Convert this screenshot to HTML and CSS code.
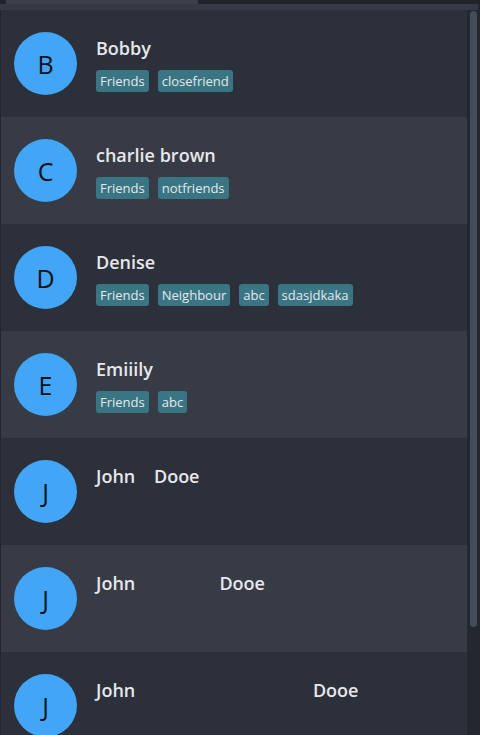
FILE: index.html
```html
<!DOCTYPE html>
<html>
<head>
<meta charset="utf-8">
<link rel="stylesheet" href="styles.css">
</head>
<body>
<div class="tabbar"><div class="tab"></div></div>
<div class="band"></div>
<div class="pane">
<div class="list">
  <div class="row">
    <div class="avatar">B</div>
    <div class="info"><div class="name">Bobby</div><div class="tags"><span class="tag">Friends</span><span class="tag">closefriend</span></div></div>
  </div>
  <div class="row alt">
    <div class="avatar">C</div>
    <div class="info"><div class="name">charlie brown</div><div class="tags"><span class="tag">Friends</span><span class="tag">notfriends</span></div></div>
  </div>
  <div class="row">
    <div class="avatar">D</div>
    <div class="info"><div class="name">Denise</div><div class="tags"><span class="tag">Friends</span><span class="tag">Neighbour</span><span class="tag">abc</span><span class="tag">sdasjdkaka</span></div></div>
  </div>
  <div class="row alt">
    <div class="avatar">E</div>
    <div class="info"><div class="name">Emiiily</div><div class="tags"><span class="tag">Friends</span><span class="tag">abc</span></div></div>
  </div>
  <div class="row">
    <div class="avatar">J</div>
    <div class="info"><div class="name">John    Dooe</div></div>
  </div>
  <div class="row alt">
    <div class="avatar">J</div>
    <div class="info"><div class="name">John                  Dooe</div></div>
  </div>
  <div class="row">
    <div class="avatar">J</div>
    <div class="info"><div class="name">John                                      Dooe</div></div>
  </div>
</div>
<div class="scrollbar"><div class="thumb"></div></div>
</div>
</body>
</html>
```
FILE: styles.css
```css
html, body {
  margin: 0;
  padding: 0;
  background: #22262e;
  overflow: hidden;
}
body {
  font-family: "Open Sans", "Noto Sans", sans-serif;
  width: 480px;
  height: 735px;
}
.tabbar {
  height: 4px;
  background: #1f232a;
  padding-left: 6px;
}
.tab {
  width: 192px;
  height: 4px;
  background: #3b3f49;
}
.band {
  height: 6px;
  width: 478px;
  background: #353a44;
}
.pane {
  height: 725px;
  display: flex;
  overflow: hidden;
}
.list {
  flex: 1;
  overflow: hidden;
  border-left: 1px solid #22262e;
}
.scrollbar {
  width: 13px;
  flex-shrink: 0;
  background: #232830;
  padding: 1px 3px;
  box-sizing: border-box;
}
.thumb {
  height: 616px;
  background: #444c58;
  border-radius: 4px;
}
.row {
  height: 107px;
  box-sizing: border-box;
  display: flex;
  align-items: flex-start;
  padding: 22px 0 0 13px;
  background: #2b303b;
}
.row.alt {
  background: #363b46;
}
.avatar {
  width: 63px;
  height: 63px;
  border-radius: 50%;
  background: #42a5f5;
  color: #0d1117;
  font-size: 25px;
  display: flex;
  align-items: center;
  justify-content: center;
  flex-shrink: 0;
}
.info {
  margin-left: 19px;
  display: flex;
  flex-direction: column;
  gap: 10px;
  padding-top: 4px;
}
.name {
  color: #e8e8ea;
  font-size: 18px;
  line-height: 24px;
  font-weight: 600;
  white-space: pre;
}
.tags {
  display: flex;
  gap: 9px;
}
.tag {
  background: #3a7584;
  color: #e6e8ea;
  font-size: 13px;
  line-height: 22px;
  height: 22px;
  padding: 0 4px;
  border-radius: 3px;
}
```
